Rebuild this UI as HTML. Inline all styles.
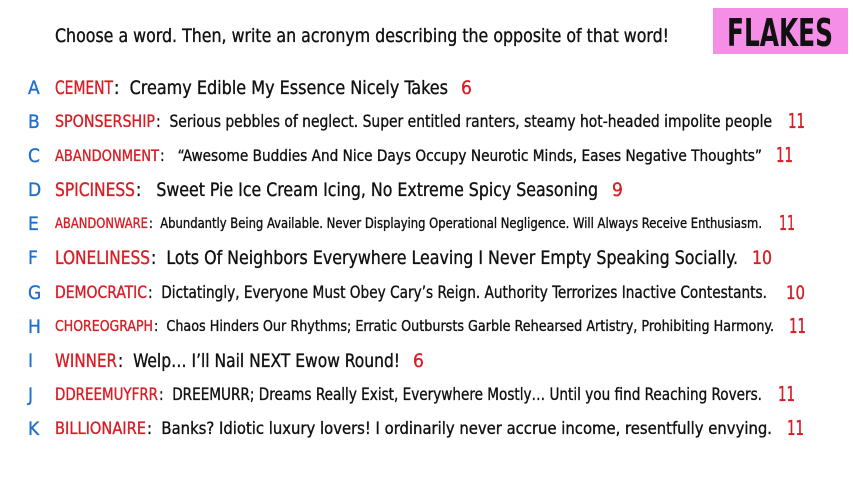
<!DOCTYPE html>
<html><head><meta charset="utf-8"><style>
html,body{margin:0;padding:0;background:#fff;width:853px;height:480px;overflow:hidden}
svg{display:block}
text{font-family:"Liberation Sans Narrow","DejaVu Sans Condensed","Liberation Sans",sans-serif;white-space:pre;stroke-width:0.35px}
.l{fill:#1f6fcf;stroke:#1f6fcf}.r{fill:#d61f26;stroke:#d61f26}.b{fill:#111;stroke:#111}
.n{stroke:none}
</style></head><body>
<svg width="853" height="480" viewBox="0 0 853 480" xml:space="preserve">
<rect x="713" y="8" width="135" height="46" fill="#f48ee6"/>
<text x="727" y="46" font-size="38" font-weight="bold" class="b n" textLength="106" lengthAdjust="spacingAndGlyphs">FLAKES</text>
<text x="55" y="42" font-size="19" class="b" textLength="614" lengthAdjust="spacingAndGlyphs">Choose a word. Then, write an acronym describing the opposite of that word!</text>

<text x="28" y="94" font-size="19" class="l">A</text>
<text x="55" y="94" font-size="19" class="r" textLength="58" lengthAdjust="spacingAndGlyphs">CEMENT</text>
<text x="114" y="94" font-size="19" class="b" textLength="334" lengthAdjust="spacingAndGlyphs">:  Creamy Edible My Essence Nicely Takes</text>
<text x="461" y="94" font-size="19" class="r">6</text>

<text x="28" y="128" font-size="19" class="l">B</text>
<text x="55" y="127" font-size="17" class="r" textLength="100" lengthAdjust="spacingAndGlyphs">SPONSERSHIP</text>
<text x="156" y="127" font-size="17" class="b" textLength="616" lengthAdjust="spacingAndGlyphs">:  Serious pebbles of neglect. Super entitled ranters, steamy hot-headed impolite people</text>
<text x="788" y="128" font-size="20" class="r" textLength="17" lengthAdjust="spacingAndGlyphs">11</text>

<text x="28" y="162" font-size="19" class="l">C</text>
<text x="55" y="161" font-size="16" class="r" textLength="104" lengthAdjust="spacingAndGlyphs">ABANDONMENT</text>
<text x="160" y="161" font-size="16" class="b" textLength="602" lengthAdjust="spacingAndGlyphs">:   “Awesome Buddies And Nice Days Occupy Neurotic Minds, Eases Negative Thoughts”</text>
<text x="776" y="162" font-size="20" class="r" textLength="17" lengthAdjust="spacingAndGlyphs">11</text>

<text x="28" y="196" font-size="19" class="l">D</text>
<text x="55" y="196" font-size="19" class="r" textLength="80" lengthAdjust="spacingAndGlyphs">SPICINESS</text>
<text x="136" y="196" font-size="19" class="b" textLength="462" lengthAdjust="spacingAndGlyphs">:   Sweet Pie Ice Cream Icing, No Extreme Spicy Seasoning</text>
<text x="612" y="196" font-size="19" class="r">9</text>

<text x="28" y="230" font-size="19" class="l">E</text>
<text x="55" y="228" font-size="14" class="r" textLength="93" lengthAdjust="spacingAndGlyphs">ABANDONWARE</text>
<text x="149" y="228" font-size="14" class="b" textLength="613" lengthAdjust="spacingAndGlyphs">:  Abundantly Being Available. Never Displaying Operational Negligence. Will Always Receive Enthusiasm.</text>
<text x="779" y="230" font-size="20" class="r" textLength="16" lengthAdjust="spacingAndGlyphs">11</text>

<text x="28" y="264" font-size="19" class="l">F</text>
<text x="55" y="264" font-size="19" class="r" textLength="95" lengthAdjust="spacingAndGlyphs">LONELINESS</text>
<text x="151" y="264" font-size="19" class="b" textLength="587" lengthAdjust="spacingAndGlyphs">:  Lots Of Neighbors Everywhere Leaving I Never Empty Speaking Socially.</text>
<text x="752" y="264" font-size="19" class="r" textLength="20" lengthAdjust="spacingAndGlyphs">10</text>

<text x="28" y="299" font-size="19" class="l">G</text>
<text x="55" y="298" font-size="17" class="r" textLength="92" lengthAdjust="spacingAndGlyphs">DEMOCRATIC</text>
<text x="148" y="298" font-size="17" class="b" textLength="619" lengthAdjust="spacingAndGlyphs">:  Dictatingly, Everyone Must Obey Cary’s Reign. Authority Terrorizes Inactive Contestants.</text>
<text x="786" y="299" font-size="19" class="r" textLength="19" lengthAdjust="spacingAndGlyphs">10</text>

<text x="28" y="333" font-size="19" class="l">H</text>
<text x="55" y="331" font-size="15" class="r" textLength="98" lengthAdjust="spacingAndGlyphs">CHOREOGRAPH</text>
<text x="154" y="331" font-size="15" class="b" textLength="620" lengthAdjust="spacingAndGlyphs">:  Chaos Hinders Our Rhythms; Erratic Outbursts Garble Rehearsed Artistry, Prohibiting Harmony.</text>
<text x="789" y="333" font-size="20" class="r" textLength="17" lengthAdjust="spacingAndGlyphs">11</text>

<text x="28" y="367" font-size="19" class="l">I</text>
<text x="55" y="367" font-size="19" class="r" textLength="62" lengthAdjust="spacingAndGlyphs">WINNER</text>
<text x="118" y="367" font-size="19" class="b" textLength="282" lengthAdjust="spacingAndGlyphs">:  Welp… I’ll Nail NEXT Ewow Round!</text>
<text x="413" y="367" font-size="19" class="r">6</text>

<text x="28" y="401" font-size="19" class="l">J</text>
<text x="55" y="400" font-size="17" class="r" textLength="103" lengthAdjust="spacingAndGlyphs">DDREEMUYFRR</text>
<text x="159" y="400" font-size="17" class="b" textLength="603" lengthAdjust="spacingAndGlyphs">:  DREEMURR; Dreams Really Exist, Everywhere Mostly… Until you find Reaching Rovers.</text>
<text x="778" y="401" font-size="20" class="r" textLength="17" lengthAdjust="spacingAndGlyphs">11</text>

<text x="28" y="435" font-size="19" class="l">K</text>
<text x="55" y="434" font-size="17" class="r" textLength="91" lengthAdjust="spacingAndGlyphs">BILLIONAIRE</text>
<text x="147" y="434" font-size="17" class="b" textLength="625" lengthAdjust="spacingAndGlyphs">:  Banks? Idiotic luxury lovers! I ordinarily never accrue income, resentfully envying.</text>
<text x="787" y="435" font-size="20" class="r" textLength="17" lengthAdjust="spacingAndGlyphs">11</text>
</svg>
</body></html>
